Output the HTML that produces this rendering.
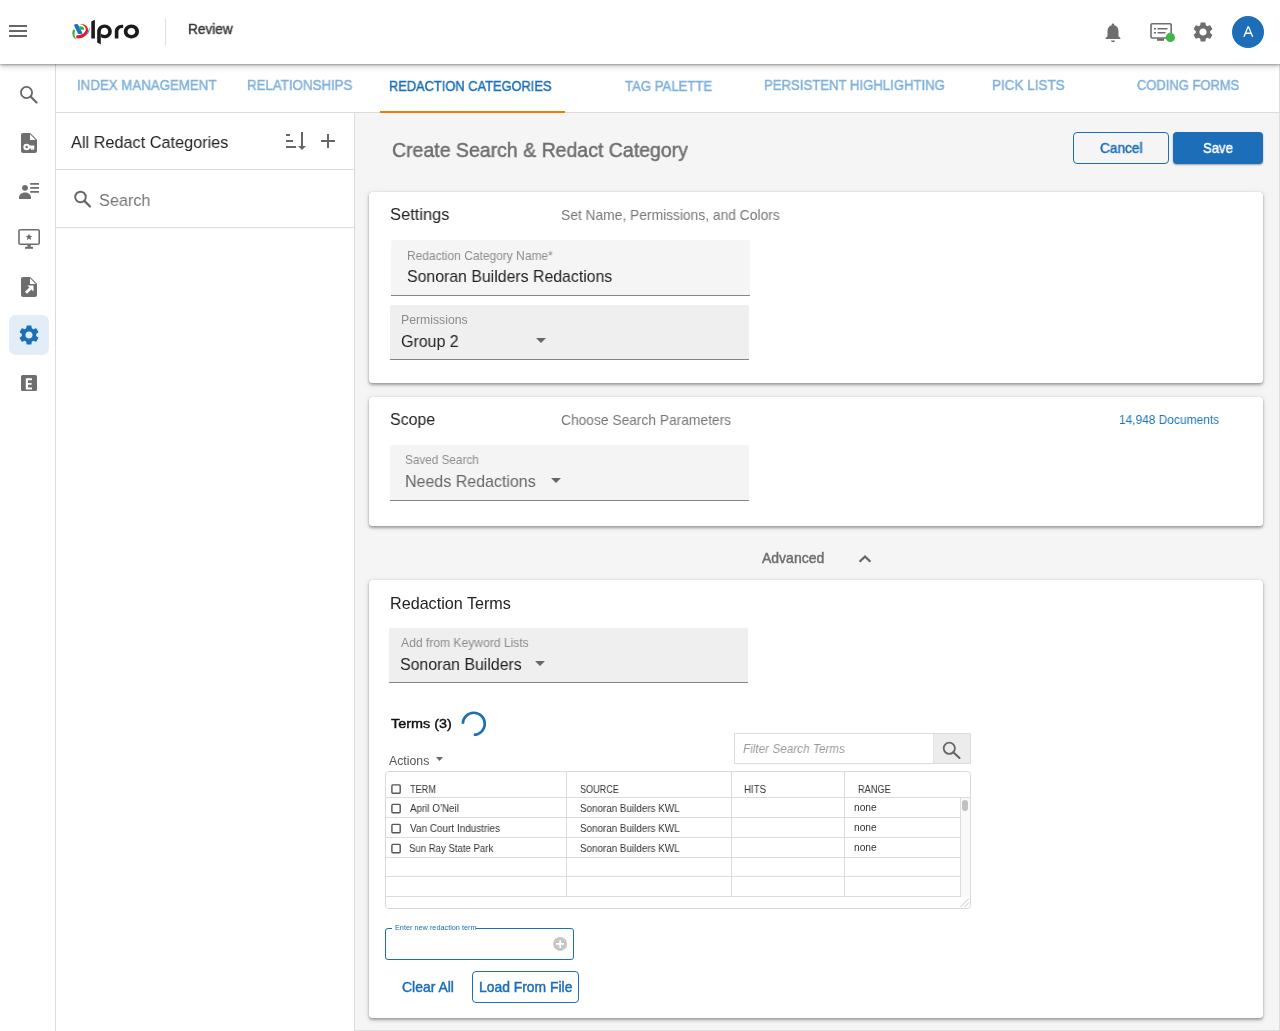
<!DOCTYPE html>
<html><head><meta charset="utf-8">
<style>
*{box-sizing:border-box;margin:0;padding:0}
html,body{width:1280px;height:1031px;overflow:hidden;background:#fff;font-family:"Liberation Sans",sans-serif;color:#222}
.a{position:absolute}
.t{position:absolute;white-space:nowrap;line-height:1;will-change:transform}
svg{position:absolute;overflow:visible}
.card{position:absolute;background:#fff;border-radius:3px;box-shadow:0 2px 3px rgba(0,0,0,.32),0 0 1px rgba(0,0,0,.28),0 1px 8px rgba(0,0,0,.07)}
.fld{position:absolute;border-radius:2px 2px 0 0;border-bottom:1px solid #858585}
</style></head><body>

<!-- MAIN BG -->
<div class="a" style="left:355px;top:113px;width:925px;height:918px;background:#f5f5f5;border-right:1px solid #dedede;border-bottom:1px solid #dedede"></div>

<!-- SIDEBAR -->
<div class="a" style="left:0;top:64px;width:56px;height:967px;background:#fff;border-right:1px solid #dcdcdc"></div>
<div class="a" style="left:9px;top:315px;width:40px;height:40px;border-radius:7px;background:#e3edf7"></div>
<svg width="56" height="400" style="left:0;top:0">
  <!-- search -->
  <circle cx="26.5" cy="92.5" r="5.6" fill="none" stroke="#666" stroke-width="1.8"/>
  <path d="M30.6 96.6L36.5 102.5" stroke="#666" stroke-width="2.1" stroke-linecap="round"/>
  <!-- doc key -->
  <path d="M23 133h7.2l6.8 6.8V151a2 2 0 0 1-2 2H23a2 2 0 0 1-2-2V135a2 2 0 0 1 2-2z" fill="#6e6e6e"/>
  <path d="M30 134.3v5.7h5.7z" fill="#fff"/>
  <circle cx="26.6" cy="147" r="3.2" fill="#fff"/>
  <circle cx="26.6" cy="147" r="1.25" fill="#6e6e6e"/>
  <path d="M29 145.6h5.3v2.8H29zM31.2 148h1.5v2h-1.5zM33 148h1.3v1.6H33z" fill="#fff"/>
  <!-- person list -->
  <circle cx="25" cy="187.8" r="2.9" fill="#6e6e6e"/>
  <path d="M19 199v-1.5c0-3 3-5 6-5s6 2 6 5V199z" fill="#6e6e6e"/>
  <path d="M30.2 183h8.8v1.7h-8.8zM30.2 187h8.8v1.7h-8.8zM30.2 191h8.8v1.7h-8.8z" fill="#6e6e6e"/>
  <!-- monitor star -->
  <rect x="19" y="229.8" width="20.2" height="14.4" rx="1.3" fill="none" stroke="#6e6e6e" stroke-width="1.6"/>
  <rect x="27.4" y="244.5" width="3.4" height="2.4" fill="#6e6e6e"/>
  <rect x="25" y="246.8" width="8" height="2" fill="#6e6e6e"/>
  <path d="M29 233.5l0.95 2.3 2.45 0.2-1.85 1.6 0.55 2.4L29 238.7l-2.1 1.3 0.55-2.4-1.85-1.6 2.45-0.2z" fill="#6e6e6e"/>
  <!-- doc arrow -->
  <path d="M23 277h7.2l6.8 6.8V295a2 2 0 0 1-2 2H23a2 2 0 0 1-2-2V279a2 2 0 0 1 2-2z" fill="#6e6e6e"/>
  <path d="M30 278.3v5.7h5.7z" fill="#fff"/>
  <path d="M27.5 285.5h6v6l-2.1-2.1-4.4 4.4-2-2 4.4-4.4z" fill="#fff"/>
  <!-- E -->
  <rect x="21" y="375" width="16" height="16" rx="1.6" fill="#6e6e6e"/>
  <path d="M25.8 378.3h6.2v2h-4v2.6h3.6v1.9h-3.6v2.6h4v2h-6.2z" fill="#fff"/>
</svg>
<!-- blue gear -->
<svg width="24" height="24" viewBox="0 0 24 24" style="left:17px;top:323px"><path fill="#1b6eb7" d="M19.14 12.94c.04-.3.06-.61.06-.94 0-.32-.02-.64-.07-.94l2.03-1.58c.18-.14.23-.41.12-.61l-1.92-3.32c-.12-.22-.37-.29-.59-.22l-2.39.96c-.5-.38-1.03-.7-1.62-.94l-.36-2.54c-.04-.24-.24-.41-.48-.41h-3.84c-.24 0-.43.17-.47.41l-.36 2.54c-.59.24-1.13.57-1.62.94l-2.39-.96c-.22-.08-.47 0-.59.22L2.74 8.87c-.12.21-.08.47.12.61l2.03 1.58c-.05.3-.09.63-.09.94s.02.64.07.94l-2.03 1.58c-.18.14-.23.41-.12.61l1.92 3.32c.12.22.37.29.59.22l2.39-.96c.5.38 1.03.7 1.62.94l.36 2.54c.05.24.24.41.48.41h3.840c.24 0 .44-.17.47-.41l.36-2.54c.59-.24 1.13-.56 1.62-.94l2.39.96c.22.08.47 0 .59-.22l1.92-3.32c.12-.22.07-.47-.12-.61l-2.010-1.58zM12 15.6c-1.98 0-3.6-1.62-3.6-3.6s1.62-3.6 3.6-3.6 3.6 1.62 3.6 3.6-1.62 3.6-3.6 3.6z"/></svg>

<!-- TABS BAR -->
<div class="a" style="left:56px;top:64px;width:1224px;height:49px;background:#fff;border-bottom:1px solid #dcdcdc;border-right:1px solid #dedede"></div>
<div class="a" style="left:380px;top:111px;width:185px;height:2px;background:#ef7d00"></div>

<!-- LEFT PANEL -->
<div class="a" style="left:56px;top:113px;width:299px;height:918px;background:#fff;border-right:1px solid #dcdcdc"></div>
<div class="a" style="left:56px;top:169px;width:298px;height:1px;background:#dcdcdc"></div>
<div class="a" style="left:56px;top:227px;width:298px;height:1px;background:#dcdcdc"></div>
<svg width="360" height="230" style="left:0;top:0">
  <path d="M286 134h4v2h-4zM286 140h7v2h-7zM286 146h10v2h-10z" fill="#666"/>
  <path d="M301 132h2v14h-2z" fill="#666"/><path d="M298 146h8l-4 4z" fill="#666"/>
  <path d="M321 140h14v2h-14zM327 134h2v14h-2z" fill="#666"/>
  <circle cx="80.5" cy="197" r="5.3" fill="none" stroke="#666" stroke-width="1.9"/>
  <path d="M84.4 200.9L90 206.5" stroke="#666" stroke-width="2.2" stroke-linecap="round"/>
</svg>

<!-- HEADER -->
<div class="a" style="left:0;top:0;width:1280px;height:64px;background:#fff;box-shadow:0 1px 2px rgba(0,0,0,.3),0 2px 6px rgba(0,0,0,.22)"></div>
<svg width="1280" height="64" style="left:0;top:0">
  <path d="M9 25h18v2H9zM9 30h18v2H9zM9 35h18v2H9z" fill="#666"/>
  <!-- logo swirl -->
  <path d="M73.4 29.2C71.4 32.5 72 37.2 76.6 39.8C74.6 37.2 73.9 33.4 75.2 30.6Z" fill="#3cb043"/>
  <path d="M80 24C85 23.4 88.6 26.8 88.1 31C87.6 35.4 83 38.6 77.6 38.5C76.2 38.3 75.7 36.6 76.5 35.4C81 35.3 85 33.3 85.7 30.2C86.2 27.6 84 25 80 24Z" fill="#d9202a"/>
  <path d="M74 25.2C74.6 23.8 77.2 23.5 78 24.6L82.6 33.2C81 34.3 79 34.2 78 33.7Z" fill="#1f6fc0"/>
  <path d="M79 26.6C81 25.8 83.6 26.7 84.1 28.4L83.9 29.9C82.2 29.4 80.6 29.9 79.9 30.9Z" fill="#3cb043"/>
  <path d="M89.3 27C90.1 30.2 89 33.2 86.9 34.6L86.5 34C88 32 88.7 29.6 89.3 27Z" fill="#4a90d9"/>
  <!-- l -->
  <path d="M91.3 21.5l3.6-1.8V38.6h-3.6z" fill="#1b1b1b"/>
  <!-- p -->
  <path d="M97.2 31.5c0-3.9 3.4-6.9 7.3-6.9 4.1 0 7.3 3 7.3 6.8s-3.2 6.8-7.3 6.8c-1.3 0-2.4-.3-3.5-.9v-3.7c.8 1 2.1 1.4 3.5 1.4 2.1 0 3.7-1.6 3.7-3.6s-1.6-3.6-3.7-3.6c-2.1 0-3.7 1.6-3.7 3.6v13.1l-3.6-2z" fill="#1b1b1b"/>
  <!-- r -->
  <path d="M114.8 31.5c0-3.9 3.2-6.8 7.2-6.8h1.2v3.3H122c-2 0-3.6 1.6-3.6 3.5v7.1h-3.6z" fill="#1b1b1b"/>
  <!-- o -->
  <path d="M131.4 24.6c4.2 0 7.6 3 7.6 6.9s-3.4 6.9-7.6 6.9-7.6-3-7.6-6.9 3.4-6.9 7.6-6.9zm0 3.3c-2.2 0-3.9 1.6-3.9 3.6s1.7 3.6 3.9 3.6 3.9-1.6 3.9-3.6-1.7-3.6-3.9-3.6z" fill="#1b1b1b"/>
  <rect x="165" y="18" width="1" height="28" fill="#dedede"/>
  <!-- bell -->
  <path d="M1113 23.5c.8 0 1.3.6 1.3 1.3v.5c2.6.7 4.2 3 4.2 5.7v5.2l1.9 1.9v1H1105.6v-1l1.9-1.9v-5.2c0-2.7 1.6-5 4.2-5.7v-.5c0-.7.5-1.3 1.3-1.3zM1111 40.5h4c0 1-.9 1.7-2 1.7s-2-.7-2-1.7z" fill="#6e6e6e"/>
  <!-- monitor list -->
  <rect x="1151" y="23.8" width="20.2" height="14.2" rx="1.2" fill="none" stroke="#6e6e6e" stroke-width="1.6"/>
  <rect x="1157" y="38.5" width="7" height="2.3" fill="#6e6e6e"/>
  <path d="M1154 28h2v1.6h-2zM1157.5 28h10v1.6h-10zM1154 32h2v1.6h-2zM1157.5 32h8v1.6h-8z" fill="#6e6e6e"/>
  <circle cx="1170.4" cy="37.4" r="4.6" fill="#3fb54a"/>
  <!-- avatar -->
  <circle cx="1248" cy="32" r="16" fill="#1b6eb7"/>
  <path d="M1243.2 36.7l4.4-10.5h1.4l4.4 10.5h-1.5l-1.15-2.8h-4.9l-1.15 2.8zm3.2-4.1h3.8l-1.9-4.6z" fill="#fff"/>
</svg>
<svg width="24" height="24" viewBox="0 0 24 24" style="left:1191px;top:20px"><path fill="#6e6e6e" d="M19.14 12.94c.04-.3.06-.61.06-.94 0-.32-.02-.64-.07-.94l2.03-1.58c.18-.14.23-.41.12-.61l-1.92-3.32c-.12-.22-.37-.29-.59-.22l-2.39.96c-.5-.38-1.03-.7-1.620-.94l-.36-2.54c-.04-.24-.24-.41-.48-.41h-3.84c-.24 0-.43.17-.47.41l-.36 2.54c-.59.24-1.13.57-1.62.94l-2.39-.96c-.22-.08-.47 0-.59.22L2.74 8.87c-.12.21-.08.47.12.61l2.03 1.58c-.05.3-.09.63-.09.94s.02.64.07.94l-2.03 1.58c-.18.14-.23.41-.12.61l1.92 3.32c.12.22.37.29.59.22l2.39-.96c.5.38 1.03.7 1.62.94l.36 2.54c.05.24.24.41.48.41h3.84c.24 0 .44-.17.47-.41l.36-2.54c.59-.24 1.13-.56 1.62-.94l2.39.96c.22.08.47 0 .59-.22l1.92-3.32c.12-.22.07-.47-.12-.61l-2.01-1.58zM12 15.6c-1.98 0-3.6-1.62-3.6-3.6s1.62-3.6 3.6-3.6 3.6 1.62 3.6 3.6-1.62 3.6-3.6 3.6z"/></svg>

<!-- BUTTONS -->
<div class="a" style="left:1073px;top:132px;width:96px;height:32px;border:1px solid #1b6eb7;border-radius:4px"></div>
<div class="a" style="left:1173px;top:132px;width:90px;height:32px;background:#1b6eb7;border-radius:4px;box-shadow:0 1px 2px rgba(0,0,0,.35)"></div>

<!-- CARD 1 -->
<div class="card" style="left:369px;top:192px;width:894px;height:191px"></div>
<div class="fld" style="left:391px;top:240px;width:359px;height:56px;background:#f5f5f5"></div>
<div class="fld" style="left:390px;top:305px;width:359px;height:55px;background:#efefef"></div>
<svg width="20" height="10" style="left:536px;top:338px"><path d="M0 0h10l-5 5z" fill="#666"/></svg>

<!-- CARD 2 -->
<div class="card" style="left:369px;top:397px;width:894px;height:129px"></div>
<div class="fld" style="left:390px;top:445px;width:359px;height:56px;background:#f4f4f4"></div>
<svg width="20" height="10" style="left:551px;top:478px"><path d="M0 0h10l-5 5z" fill="#666"/></svg>

<!-- ADVANCED chevron -->
<svg width="20" height="12" style="left:858px;top:554px"><path d="M1.6 7.8L7 2.5l5.4 5.3" fill="none" stroke="#666" stroke-width="2.3"/></svg>

<!-- CARD 3 -->
<div class="card" style="left:369px;top:580px;width:894px;height:438px"></div>
<div class="fld" style="left:389px;top:628px;width:359px;height:55px;background:#efefef"></div>
<svg width="20" height="10" style="left:535px;top:661px"><path d="M0 0h10l-5 5z" fill="#666"/></svg>
<!-- spinner -->
<svg width="30" height="30" style="left:459px;top:709px"><path d="M3.8 14.8A11 11 0 1 1 14.8 25.8" fill="none" stroke="#1b6eb7" stroke-width="2.6"/></svg>
<!-- actions arrow -->
<svg width="10" height="6" style="left:435.5px;top:756.5px"><path d="M0 0h7l-3.5 4z" fill="#666"/></svg>
<!-- filter -->
<div class="a" style="left:734px;top:733px;width:237px;height:31px;border:1px solid #dcdcdc;background:#fff"></div>
<div class="a" style="left:933px;top:734px;width:37px;height:29px;background:#ececec;border-left:1px solid #e2e2e2"></div>
<svg width="30" height="30" style="left:930px;top:732.5px">
  <circle cx="19.3" cy="15.3" r="5.6" fill="none" stroke="#666" stroke-width="1.8"/>
  <path d="M23.3 19.3L29.5 25" stroke="#666" stroke-width="2.1" stroke-linecap="round"/>
</svg>
<!-- table -->
<div class="a" style="left:385px;top:771px;width:586px;height:138px;border:1px solid #d9d9d9;border-radius:4px;background:#fff"></div>
<div class="a" style="left:386px;top:797px;width:584px;height:1px;background:#dcdcdc"></div>
<div class="a" style="left:960px;top:798px;width:10px;height:99px;background:#f9f9f9;border-left:1px solid #dcdcdc"></div>
<div class="a" style="left:962px;top:800px;width:6px;height:11px;border-radius:3px;background:#c2c2c2"></div>
<div class="a" style="left:566px;top:772px;width:1px;height:125px;background:#dcdcdc"></div>
<div class="a" style="left:731px;top:772px;width:1px;height:125px;background:#dcdcdc"></div>
<div class="a" style="left:844px;top:772px;width:1px;height:125px;background:#dcdcdc"></div>
<div class="a" style="left:386px;top:817px;width:575px;height:1px;background:#dcdcdc"></div>
<div class="a" style="left:386px;top:837px;width:575px;height:1px;background:#dcdcdc"></div>
<div class="a" style="left:386px;top:857px;width:575px;height:1px;background:#dcdcdc"></div>
<div class="a" style="left:386px;top:876px;width:575px;height:1px;background:#dcdcdc"></div>
<div class="a" style="left:386px;top:896px;width:575px;height:1px;background:#dcdcdc"></div>
<svg width="12" height="12" style="left:959px;top:897px"><path d="M1.5 10L10 1.5M5.5 10L10 5.5" stroke="#bbb" stroke-width="0.9"/></svg>
<svg width="600" height="100" style="left:380px;top:780px">
  <rect x="11.9" y="4.9" width="8.3" height="8.3" rx="1" fill="none" stroke="#555" stroke-width="1.4"/>
  <rect x="11.9" y="24.4" width="8.3" height="8.3" rx="1" fill="none" stroke="#555" stroke-width="1.4"/>
  <rect x="11.9" y="44.4" width="8.3" height="8.3" rx="1" fill="none" stroke="#555" stroke-width="1.4"/>
  <rect x="11.9" y="64.4" width="8.3" height="8.3" rx="1" fill="none" stroke="#555" stroke-width="1.4"/>
</svg>
<!-- new term -->
<div class="a" style="left:385px;top:928px;width:189px;height:32px;border:1.2px solid #1b6eb7;border-radius:3px"></div>
<div class="a" style="left:392px;top:926px;width:84px;height:4px;background:#fff"></div>
<svg width="20" height="20" style="left:550px;top:934px"><circle cx="10.1" cy="9.9" r="7" fill="#c6c6c6"/><path d="M6 9.1h8v1.6H6zM9.3 5.9h1.6v8H9.3z" fill="#fff"/></svg>
<!-- load from file -->
<div class="a" style="left:472px;top:971px;width:107px;height:32px;border:1px solid #1b6eb7;border-radius:4px"></div>

<div id="review" class="t" style="left:188.00px;top:22.70px;font-size:13.9px;font-weight:normal;-webkit-text-stroke:0.45px #3a3a3a;color:#3a3a3a;letter-spacing:0.000px;transform:scaleX(0.9817);transform-origin:0 0;">Review</div>
<div id="tab1" class="t" style="left:77.00px;top:79.10px;font-size:13.9px;font-weight:normal;-webkit-text-stroke:0.45px #7fb1dc;color:#7fb1dc;letter-spacing:0.000px;transform:scaleX(0.9559);transform-origin:0 0;">INDEX MANAGEMENT</div>
<div id="tab2" class="t" style="left:247.00px;top:79.10px;font-size:13.9px;font-weight:normal;-webkit-text-stroke:0.45px #7fb1dc;color:#7fb1dc;letter-spacing:0.000px;transform:scaleX(0.9576);transform-origin:0 0;">RELATIONSHIPS</div>
<div id="tab3" class="t" style="left:389.00px;top:80.10px;font-size:13.9px;font-weight:normal;-webkit-text-stroke:0.45px #1b6eb7;color:#1b6eb7;letter-spacing:0.000px;transform:scaleX(0.9247);transform-origin:0 0;">REDACTION CATEGORIES</div>
<div id="tab4" class="t" style="left:624.50px;top:80.10px;font-size:13.9px;font-weight:normal;-webkit-text-stroke:0.45px #7fb1dc;color:#7fb1dc;letter-spacing:0.000px;transform:scaleX(0.9473);transform-origin:0 0;">TAG PALETTE</div>
<div id="tab5" class="t" style="left:764.00px;top:79.10px;font-size:13.9px;font-weight:normal;-webkit-text-stroke:0.45px #7fb1dc;color:#7fb1dc;letter-spacing:0.000px;transform:scaleX(0.9465);transform-origin:0 0;">PERSISTENT HIGHLIGHTING</div>
<div id="tab6" class="t" style="left:991.50px;top:79.10px;font-size:13.9px;font-weight:normal;-webkit-text-stroke:0.45px #7fb1dc;color:#7fb1dc;letter-spacing:0.000px;transform:scaleX(0.9710);transform-origin:0 0;">PICK LISTS</div>
<div id="tab7" class="t" style="left:1137.00px;top:79.10px;font-size:13.9px;font-weight:normal;-webkit-text-stroke:0.45px #7fb1dc;color:#7fb1dc;letter-spacing:0.000px;transform:scaleX(0.9329);transform-origin:0 0;">CODING FORMS</div>
<div id="allcat" class="t" style="left:70.75px;top:134.56px;font-size:16.7px;font-weight:normal;color:#222;letter-spacing:0.000px;transform:scaleX(0.9752);transform-origin:0 0;">All Redact Categories</div>
<div id="search" class="t" style="left:98.50px;top:192.56px;font-size:16.7px;font-weight:normal;color:#757575;letter-spacing:0.000px;transform:scaleX(0.9730);transform-origin:0 0;">Search</div>
<div id="title" class="t" style="left:392.25px;top:139.90px;font-size:20.0px;font-weight:normal;-webkit-text-stroke:0.45px #6e6e6e;color:#6e6e6e;letter-spacing:0.000px;transform:scaleX(0.9750);transform-origin:0 0;">Create Search &amp; Redact Category</div>
<div id="cancel" class="t" style="left:1100.00px;top:140.98px;font-size:14.2px;font-weight:normal;-webkit-text-stroke:0.45px #1b6eb7;color:#1b6eb7;letter-spacing:0.000px;transform:scaleX(0.9634);transform-origin:0 0;">Cancel</div>
<div id="save" class="t" style="left:1202.50px;top:140.78px;font-size:14.2px;font-weight:normal;-webkit-text-stroke:0.45px #fff;color:#fff;letter-spacing:0.000px;transform:scaleX(0.9240);transform-origin:0 0;">Save</div>
<div id="settings" class="t" style="left:389.50px;top:207.06px;font-size:16.7px;font-weight:normal;color:#222;letter-spacing:0.000px;transform:scaleX(0.9849);transform-origin:0 0;">Settings</div>
<div id="setname" class="t" style="left:561.00px;top:208.08px;font-size:14.1px;font-weight:normal;color:#777;letter-spacing:0.000px;transform:scaleX(0.9794);transform-origin:0 0;">Set Name, Permissions, and Colors</div>
<div id="lbl1" class="t" style="left:406.50px;top:249.96px;font-size:12.2px;font-weight:normal;color:#8c8c8c;letter-spacing:0.000px;transform:scaleX(0.9824);transform-origin:0 0;">Redaction Category Name*</div>
<div id="val1" class="t" style="left:406.50px;top:268.12px;font-size:16.4px;font-weight:normal;color:#222;letter-spacing:0.000px;transform:scaleX(0.9671);transform-origin:0 0;">Sonoran Builders Redactions</div>
<div id="lbl2" class="t" style="left:400.50px;top:313.66px;font-size:12.2px;font-weight:normal;color:#8c8c8c;letter-spacing:0.000px;transform:scaleX(1.0039);transform-origin:0 0;">Permissions</div>
<div id="val2" class="t" style="left:400.50px;top:333.12px;font-size:16.4px;font-weight:normal;color:#222;letter-spacing:0.000px;transform:scaleX(0.9741);transform-origin:0 0;">Group 2</div>
<div id="scope" class="t" style="left:389.50px;top:412.46px;font-size:16.7px;font-weight:normal;color:#222;letter-spacing:0.000px;transform:scaleX(0.9539);transform-origin:0 0;">Scope</div>
<div id="choose" class="t" style="left:561.00px;top:412.78px;font-size:14.1px;font-weight:normal;color:#777;letter-spacing:0.000px;transform:scaleX(0.9781);transform-origin:0 0;">Choose Search Parameters</div>
<div id="docs" class="t" style="left:1118.50px;top:413.98px;font-size:12.6px;font-weight:normal;color:#1b75bb;letter-spacing:0.000px;transform:scaleX(0.9464);transform-origin:0 0;">14,948 Documents</div>
<div id="lbl3" class="t" style="left:405.00px;top:454.36px;font-size:12.2px;font-weight:normal;color:#8c8c8c;letter-spacing:0.000px;transform:scaleX(0.9632);transform-origin:0 0;">Saved Search</div>
<div id="val3" class="t" style="left:405.00px;top:473.22px;font-size:16.4px;font-weight:normal;color:#666;letter-spacing:0.000px;transform:scaleX(0.9762);transform-origin:0 0;">Needs Redactions</div>
<div id="adv" class="t" style="left:761.50px;top:551.80px;font-size:13.9px;font-weight:normal;-webkit-text-stroke:0.45px #6e6e6e;color:#6e6e6e;letter-spacing:0.000px;transform:scaleX(1.0071);transform-origin:0 0;">Advanced</div>
<div id="redterms" class="t" style="left:389.50px;top:594.88px;font-size:16.1px;font-weight:normal;color:#222;letter-spacing:0.000px;transform:scaleX(1.0035);transform-origin:0 0;">Redaction Terms</div>
<div id="lbl4" class="t" style="left:400.50px;top:637.16px;font-size:12.2px;font-weight:normal;color:#8c8c8c;letter-spacing:0.000px;transform:scaleX(0.9927);transform-origin:0 0;">Add from Keyword Lists</div>
<div id="val4" class="t" style="left:399.50px;top:656.02px;font-size:16.4px;font-weight:normal;color:#222;letter-spacing:0.000px;transform:scaleX(0.9683);transform-origin:0 0;">Sonoran Builders</div>
<div id="terms" class="t" style="left:391.00px;top:717.18px;font-size:13.2px;font-weight:normal;-webkit-text-stroke:0.42px #111;color:#111;letter-spacing:0.000px;transform:scaleX(1.0917);transform-origin:0 0;">Terms (3)</div>
<div id="actions" class="t" style="left:389.00px;top:754.50px;font-size:12.0px;font-weight:normal;color:#555;letter-spacing:0.000px;transform:scaleX(1.0256);transform-origin:0 0;">Actions</div>
<div id="filter" class="t" style="left:743.00px;top:743.42px;font-size:12.6px;font-weight:normal;color:#9a9a9a;letter-spacing:0.000px;transform:scaleX(0.9323);transform-origin:0 0;font-style:italic;">Filter Search Terms</div>
<div id="hterm" class="t" style="left:410.00px;top:784.84px;font-size:10.2px;font-weight:normal;color:#333;letter-spacing:0.000px;transform:scaleX(0.8959);transform-origin:0 0;">TERM</div>
<div id="hsource" class="t" style="left:579.50px;top:784.64px;font-size:10.2px;font-weight:normal;color:#333;letter-spacing:0.000px;transform:scaleX(0.8916);transform-origin:0 0;">SOURCE</div>
<div id="hhits" class="t" style="left:744.00px;top:784.84px;font-size:10.2px;font-weight:normal;color:#333;letter-spacing:0.000px;transform:scaleX(0.9459);transform-origin:0 0;">HITS</div>
<div id="hrange" class="t" style="left:857.50px;top:784.74px;font-size:10.2px;font-weight:normal;color:#333;letter-spacing:0.000px;transform:scaleX(0.9025);transform-origin:0 0;">RANGE</div>
<div id="r1" class="t" style="left:410.00px;top:804.36px;font-size:10.2px;font-weight:normal;color:#333;letter-spacing:0.000px;transform:scaleX(0.9582);transform-origin:0 0;">April O’Neil</div>
<div id="r2" class="t" style="left:410.00px;top:824.26px;font-size:10.2px;font-weight:normal;color:#333;letter-spacing:0.000px;transform:scaleX(0.9779);transform-origin:0 0;">Van Court Industries</div>
<div id="r3" class="t" style="left:409.00px;top:844.06px;font-size:10.2px;font-weight:normal;color:#333;letter-spacing:0.000px;transform:scaleX(0.9414);transform-origin:0 0;">Sun Ray State Park</div>
<div id="s1" class="t" style="left:579.50px;top:804.16px;font-size:10.2px;font-weight:normal;color:#333;letter-spacing:0.000px;transform:scaleX(0.9659);transform-origin:0 0;">Sonoran Builders KWL</div>
<div id="s2" class="t" style="left:579.50px;top:824.16px;font-size:10.2px;font-weight:normal;color:#333;letter-spacing:0.000px;transform:scaleX(0.9659);transform-origin:0 0;">Sonoran Builders KWL</div>
<div id="s3" class="t" style="left:579.50px;top:844.16px;font-size:10.2px;font-weight:normal;color:#333;letter-spacing:0.000px;transform:scaleX(0.9659);transform-origin:0 0;">Sonoran Builders KWL</div>
<div id="n1" class="t" style="left:854.00px;top:802.81px;font-size:10.2px;font-weight:normal;color:#333;letter-spacing:0.000px;transform:scaleX(1.0027);transform-origin:0 0;">none</div>
<div id="n2" class="t" style="left:854.00px;top:823.21px;font-size:10.2px;font-weight:normal;color:#333;letter-spacing:0.000px;transform:scaleX(1.0027);transform-origin:0 0;">none</div>
<div id="n3" class="t" style="left:854.00px;top:842.81px;font-size:10.2px;font-weight:normal;color:#333;letter-spacing:0.000px;transform:scaleX(1.0027);transform-origin:0 0;">none</div>
<div id="legend" class="t" style="left:395.00px;top:924.26px;font-size:7.2px;font-weight:normal;color:#1b6eb7;letter-spacing:0.000px;transform:scaleX(1.0155);transform-origin:0 0;">Enter new redaction term</div>
<div id="clear" class="t" style="left:401.50px;top:981.48px;font-size:13.9px;font-weight:normal;-webkit-text-stroke:0.45px #1b6eb7;color:#1b6eb7;letter-spacing:0.000px;transform:scaleX(1.0040);transform-origin:0 0;">Clear All</div>
<div id="load" class="t" style="left:478.50px;top:981.48px;font-size:13.9px;font-weight:normal;-webkit-text-stroke:0.45px #1b6eb7;color:#1b6eb7;letter-spacing:0.000px;transform:scaleX(0.9956);transform-origin:0 0;">Load From File</div>
</body></html>
